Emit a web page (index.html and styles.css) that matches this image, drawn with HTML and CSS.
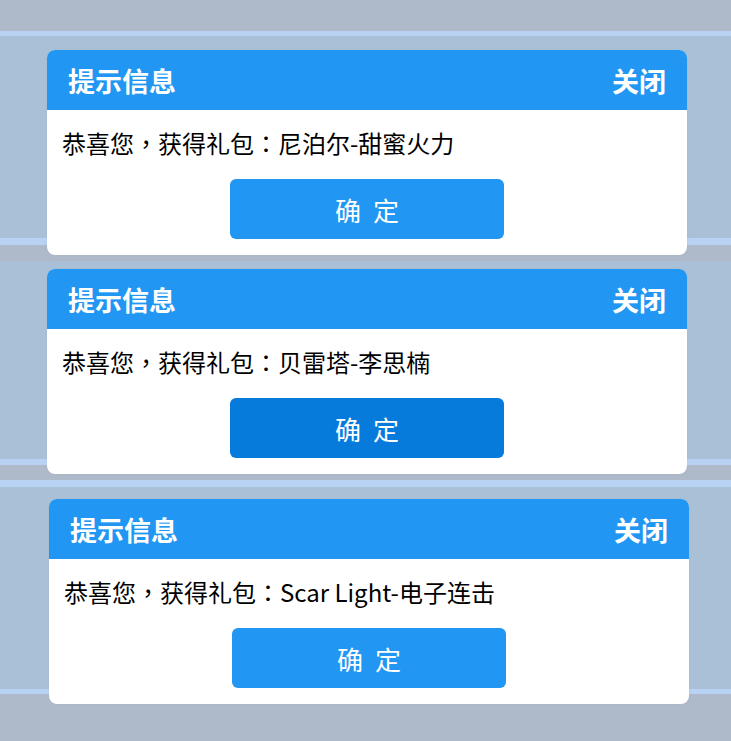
FILE: index.html
```html
<!DOCTYPE html>
<html lang="zh-CN">
<head>
    <meta charset="UTF-8">
    <meta name="viewport" content="width=device-width, initial-scale=1.0">
    <title>提示信息</title>
    <link rel="stylesheet" href="styles.css">
</head>
<body>
    <div class="shot shot-top">
        <div class="dialog">
            <div class="dialog-head">
                <span class="dialog-title">提示信息</span>
                <span class="dialog-close">关闭</span>
            </div>
            <div class="dialog-body">
                <p class="dialog-msg">恭喜您<span class="punct" lang="zh-TW">，</span>获得礼包<span class="punct" lang="zh-TW">：</span>尼泊尔-甜蜜火力</p>
                <button type="button" class="btn-ok">确 定</button>
            </div>
        </div>
    </div>

    <div class="shot shot-mid">
        <div class="dialog">
            <div class="dialog-head">
                <span class="dialog-title">提示信息</span>
                <span class="dialog-close">关闭</span>
            </div>
            <div class="dialog-body">
                <p class="dialog-msg">恭喜您<span class="punct" lang="zh-TW">，</span>获得礼包<span class="punct" lang="zh-TW">：</span>贝雷塔-李思楠</p>
                <button type="button" class="btn-ok pressed">确 定</button>
            </div>
        </div>
    </div>

    <div class="shot shot-bottom">
        <div class="dialog">
            <div class="dialog-head">
                <span class="dialog-title">提示信息</span>
                <span class="dialog-close">关闭</span>
            </div>
            <div class="dialog-body">
                <p class="dialog-msg">恭喜您<span class="punct" lang="zh-TW">，</span>获得礼包<span class="punct" lang="zh-TW">：</span>Scar Light-电子连击</p>
                <button type="button" class="btn-ok">确 定</button>
            </div>
        </div>
    </div>
</body>
</html>
```

FILE: styles.css
```css
/* Reset some default styles */
* {
    margin: 0;
    padding: 0;
    box-sizing: border-box;
}

body {
    font-family: "Noto Sans CJK SC", "Noto Sans", sans-serif;
    background-color: #aeb9c9;
    width: 731px;
}

/* each strip: grey frame, light line, blue backdrop */
.shot {
    display: flex;
    flex-direction: column;
}

.shot-top {
    height: 261px;
    padding: 50px 44px 0 47px;
    background: linear-gradient(to bottom,
        #aeb9c9 0, #aeb9c9 31px,
        #b8d2f4 31px, #b8d2f4 36px,
        #aac0d6 36px, #aac0d6 238px,
        #b8d2f4 238px, #b8d2f4 245px,
        #aeb9c9 245px);
}

.shot-mid {
    height: 219px;
    padding: 8px 44px 0 47px;
    background: linear-gradient(to bottom,
        #aac0d6 0, #aac0d6 198px,
        #b8d2f4 198px, #b8d2f4 204px,
        #aeb9c9 204px);
}

.shot-bottom {
    height: 261px;
    padding: 19px 42px 0 49px;
    background: linear-gradient(to bottom,
        #b8d2f4 0, #b8d2f4 7px,
        #aac0d6 7px, #aac0d6 209px,
        #b8d2f4 209px, #b8d2f4 214px,
        #aeb9c9 214px);
}

.dialog {
    width: 640px;
    background-color: white;
    border-radius: 8px;
    overflow: hidden;
    box-shadow: 0 0 2px rgba(60, 80, 110, 0.08);
}

.dialog-head {
    height: 60px;
    padding: 0 21px;
    display: flex;
    justify-content: space-between;
    align-items: center;
    background-color: #2196f3;
    color: white;
    font-size: 27px;
    font-weight: bold;
}

.dialog-body {
    padding: 15px 15px 16px;
    display: flex;
    flex-direction: column;
}

.dialog-msg {
    font-size: 24px;
    line-height: 36px;
    color: #000;
}

/* full-width punctuation sits in the middle of its box */
.punct {
    font-family: "Noto Sans CJK TC", "Noto Sans CJK SC", sans-serif;
}

.btn-ok {
    width: 274px;
    height: 60px;
    margin: 18px auto 0;
    border: none;
    border-radius: 6px;
    background-color: #2196f3;
    color: white;
    font-family: inherit;
    font-size: 26px;
    word-spacing: 6px;
    cursor: pointer;
}

.btn-ok.pressed {
    background-color: #067bdc;
}
```
